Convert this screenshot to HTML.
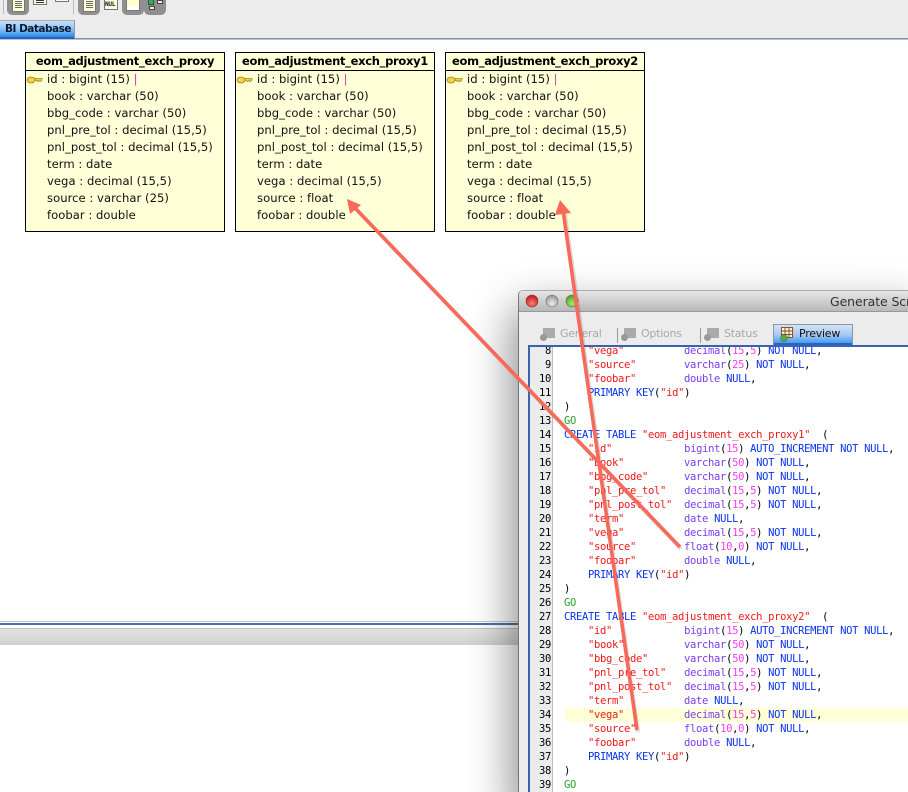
<!DOCTYPE html>
<html><head><meta charset="utf-8"><style>
html,body{margin:0;padding:0;background:#fff}
#p{position:relative;width:908px;height:792px;overflow:hidden;background:#fff;font-family:"DejaVu Sans","Liberation Sans",sans-serif}
#p div{position:absolute;box-sizing:border-box}
.t{top:52px;width:200px;height:180px;background:#ffffd8;border:1px solid #000}
.h{left:0;top:0;width:198px;height:18px;border-bottom:1px solid #000;font:bold 11.5px/17px "DejaVu Sans",sans-serif;text-align:center;letter-spacing:-.3px;color:#000;white-space:nowrap}
.r{left:21px;font-size:11.6px;line-height:17px;height:17px;color:#111;white-space:pre;letter-spacing:.03px}
.btn{top:-8px;background:#8f8f8f;border-radius:5px;height:23px}
.doc{background:#ffffd8;border:1px solid #777}
.code{left:564px;margin-top:1px;font:10.5px/14px "DejaVu Sans Mono","Liberation Mono",monospace;letter-spacing:-.32px;white-space:pre;color:#000;height:14px}
.n{left:529px;width:22px;margin-top:1px;text-align:right;font:10.5px/14px "DejaVu Sans Mono","Liberation Mono",monospace;letter-spacing:-.32px;color:#000;height:14px}
.code i{font-style:normal}
.s{color:#f01818}.y{color:#7b3df0}.k{color:#0a32f0}.m{color:#fb3cf0}.g{color:#2aa02a}
.tab{top:327px;font:11px/14px "DejaVu Sans",sans-serif;letter-spacing:-.25px;color:#a8a8a8;white-space:nowrap}
</style></head><body><div id="p">

<div style="left:0;top:0;width:908px;height:38px;background:#ececec"></div>
<div style="left:0;top:38px;width:908px;height:1px;background:#7f8fae"></div>
<div style="left:0;top:39px;width:908px;height:1px;background:#bcc2cc"></div>
<div style="left:3px;top:0;width:1px;height:14px;background:#bbb"></div>
<div style="left:73px;top:0;width:1px;height:14px;background:#bbb"></div>
<div class="btn" style="left:7px;width:22px"></div>
<div class="doc" style="left:12px;top:-4px;width:13px;height:16px;background:#ffffd0"></div>
<div style="left:15px;top:1px;width:7px;height:8px;background:repeating-linear-gradient(#667 0 1px,transparent 1px 2px)"></div>
<div class="doc" style="left:33px;top:-6px;width:14px;height:11px"></div>
<div style="left:36px;top:0;width:8px;height:3px;background:repeating-linear-gradient(#335 0 1px,transparent 1px 2px)"></div>
<div class="doc" style="left:55px;top:-6px;width:14px;height:8px"></div>
<div class="btn" style="left:78px;width:22px"></div>
<div class="doc" style="left:83px;top:-4px;width:13px;height:16px;background:#ffffd0"></div>
<div style="left:86px;top:1px;width:7px;height:8px;background:repeating-linear-gradient(#667 0 1px,transparent 1px 2px)"></div>
<div class="doc" style="left:104px;top:-4px;width:14px;height:14px"></div>
<div style="left:105px;top:1px;font:bold 6px/7px 'DejaVu Sans Mono',monospace;color:#113;letter-spacing:-.2px">NUL</div>
<div class="btn" style="left:122px;width:22px"></div>
<div class="doc" style="left:126px;top:-4px;width:14px;height:15px;background:linear-gradient(#ffffd0 0 9px,#fff 9px)"></div>
<div class="btn" style="left:144px;width:22px"></div>
<div style="left:148px;top:-1px;width:6px;height:6px;background:#3a6;border:1px solid #353"></div>
<div style="left:157px;top:0;width:6px;height:4px;background:#eee;border:1px solid #444"></div>
<div style="left:149px;top:6px;width:6px;height:4px;background:#eee;border:1px solid #444"></div>

<div style="left:0;top:20px;width:75px;height:18px;border-top:1px solid #aaa;border-right:1px solid #999;background:linear-gradient(#c4dcf8 0,#9cc8f6 40%,#4aa4f4 75%,#2a78e0 100%)"></div>
<div style="left:0;top:37px;width:74px;height:2px;background:#2a62c0"></div>
<div style="left:5px;top:22px;font:bold 10.5px/15px 'DejaVu Sans',sans-serif;color:#0a1a30;white-space:nowrap;letter-spacing:-.5px">BI Database</div>

<div class="t" style="left:25px"><div class="h">eom_adjustment_exch_proxy</div>
<div class="r" style="top:18px">id : bigint (15) <span style="color:#c040c0">|</span></div><div class="r" style="top:35px">book : varchar (50)</div><div class="r" style="top:52px">bbg_code : varchar (50)</div><div class="r" style="top:69px">pnl_pre_tol : decimal (15,5)</div><div class="r" style="top:86px">pnl_post_tol : decimal (15,5)</div><div class="r" style="top:103px">term : date</div><div class="r" style="top:120px">vega : decimal (15,5)</div><div class="r" style="top:137px">source : varchar (25)</div><div class="r" style="top:154px">foobar : double</div></div>
<div class="t" style="left:235px"><div class="h">eom_adjustment_exch_proxy1</div>
<div class="r" style="top:18px">id : bigint (15) <span style="color:#c040c0">|</span></div><div class="r" style="top:35px">book : varchar (50)</div><div class="r" style="top:52px">bbg_code : varchar (50)</div><div class="r" style="top:69px">pnl_pre_tol : decimal (15,5)</div><div class="r" style="top:86px">pnl_post_tol : decimal (15,5)</div><div class="r" style="top:103px">term : date</div><div class="r" style="top:120px">vega : decimal (15,5)</div><div class="r" style="top:137px">source : float</div><div class="r" style="top:154px">foobar : double</div></div>
<div class="t" style="left:445px"><div class="h">eom_adjustment_exch_proxy2</div>
<div class="r" style="top:18px">id : bigint (15) <span style="color:#c040c0">|</span></div><div class="r" style="top:35px">book : varchar (50)</div><div class="r" style="top:52px">bbg_code : varchar (50)</div><div class="r" style="top:69px">pnl_pre_tol : decimal (15,5)</div><div class="r" style="top:86px">pnl_post_tol : decimal (15,5)</div><div class="r" style="top:103px">term : date</div><div class="r" style="top:120px">vega : decimal (15,5)</div><div class="r" style="top:137px">source : float</div><div class="r" style="top:154px">foobar : double</div></div>

<svg style="position:absolute;left:0;top:0" width="660" height="100">
<g fill="#f0d23c" stroke="#a08a1c" stroke-width=".8"><ellipse cx="31" cy="80" rx="4" ry="3"/><path d="M35 78.500h7v1.500l-1.500 1.500h-1l-1-1-1 1-1-1h-1.500z"/></g>
<g fill="#f0d23c" stroke="#a08a1c" stroke-width=".8"><ellipse cx="241" cy="80" rx="4" ry="3"/><path d="M245 78.500h7v1.500l-1.500 1.500h-1l-1-1-1 1-1-1h-1.500z"/></g>
<g fill="#f0d23c" stroke="#a08a1c" stroke-width=".8"><ellipse cx="451" cy="80" rx="4" ry="3"/><path d="M455 78.500h7v1.500l-1.500 1.500h-1l-1-1-1 1-1-1h-1.500z"/></g>
</svg>

<div style="left:0;top:621px;width:520px;height:1px;background:#c8c8c8"></div>
<div style="left:0;top:623px;width:520px;height:2px;background:#4a6fb0"></div>
<div style="left:0;top:628px;width:520px;height:1px;background:#c4c4c4"></div>
<div style="left:0;top:629px;width:520px;height:16px;background:linear-gradient(#e4e4e4,#d0d0d0)"></div>

<div style="left:518px;top:290px;width:390px;height:502px;background:#ececec;border-left:1px solid #777;border-top:1px solid #aaa;border-top-left-radius:5px;box-shadow:0 24px 44px 6px rgba(0,0,0,.45)"></div>
<div style="left:519px;top:291px;width:389px;height:21px;background:linear-gradient(#e6e6e6,#b8b8b8);border-top-left-radius:4px;border-bottom:1px solid #999"></div>
<svg style="position:absolute;left:520px;top:292px" width="70" height="20">
<defs><radialGradient id="rd" cx=".5" cy=".7" r=".7"><stop offset="0" stop-color="#ff7c78"/><stop offset="1" stop-color="#b81818"/></radialGradient><radialGradient id="gy" cx=".5" cy=".7" r=".7"><stop offset="0" stop-color="#f0f0f0"/><stop offset="1" stop-color="#8e8e8e"/></radialGradient><radialGradient id="gr" cx=".5" cy=".7" r=".7"><stop offset="0" stop-color="#a8e878"/><stop offset="1" stop-color="#4a9a28"/></radialGradient></defs>
<circle cx="12" cy="9" r="6" fill="url(#rd)" stroke="#8a3030" stroke-width=".6"/><circle cx="32" cy="9" r="6" fill="url(#gy)" stroke="#777" stroke-width=".6"/><circle cx="52" cy="9" r="6" fill="url(#gr)" stroke="#4a7a30" stroke-width=".6"/>
</svg>
<div style="left:830px;top:294px;font:12.5px/15px 'DejaVu Sans',sans-serif;color:#333;white-space:nowrap;letter-spacing:-.1px">Generate Scr</div>

<svg style="position:absolute;left:540px;top:326px" width="320" height="20">
<g fill="#aaa"><rect x="3" y="2" width="12" height="10"/><circle cx="3.500" cy="11.500" r="3.500" fill="#999"/>
<rect x="84" y="2" width="12" height="10"/><circle cx="84.500" cy="11.500" r="3.500" fill="#999"/>
<rect x="167" y="2" width="12" height="10"/><circle cx="167.500" cy="11.500" r="3.500" fill="#999"/></g>
</svg>
<div class="tab" style="left:560px">General</div>
<div class="tab" style="left:641px">Options</div>
<div class="tab" style="left:724px">Status</div>
<div style="left:617px;top:328px;width:1px;height:15px;background:#999"></div>
<div style="left:700px;top:328px;width:1px;height:15px;background:#999"></div>
<div style="left:773px;top:324px;width:80px;height:21px;border:1px solid #8a97a8;border-bottom:0;background:linear-gradient(#d4e2f6 0,#a8c8f2 50%,#5aa8f4 80%,#3a8cf0 100%)"></div>
<div style="left:774px;top:343px;width:78px;height:2px;background:#2a62c0"></div>
<svg style="position:absolute;left:780px;top:326px" width="20" height="18"><rect x="1.500" y="1.500" width="11" height="10" fill="#fff6d8" stroke="#8a5030"/><path d="M1 5h12M1 8.500h12M5 1v11M9 1v11" stroke="#8a5030"/><circle cx="4" cy="12" r="3.400" fill="#5aa848" stroke="#3a7a30" stroke-width=".6"/></svg>
<div style="left:799px;top:327px;font:11px/14px 'DejaVu Sans',sans-serif;letter-spacing:-.25px;color:#111;white-space:nowrap">Preview</div>

<div style="left:528px;top:345px;width:380px;height:447px;background:#fff;border-left:2px solid #3a62b0;border-top:2px solid #3a62b0"></div>
<div style="left:530px;top:347px;width:23px;height:445px;background:#ececec;border-right:1px solid #bbb"></div>
<div style="left:565px;top:708px;width:343px;height:14px;background:#ffffd8"></div>

<div style="left:530px;top:347px;width:378px;height:445px;overflow:hidden">
<div class="n" style="left:-1px;top:-4px">8</div><div class="code" style="left:34px;top:-4px">    <i class="s">"vega"</i>          <i class="y">decimal</i>(<i class="m">15</i>,<i class="m">5</i>) <i class="k">NOT NULL</i>,</div>
<div class="n" style="left:-1px;top:10px">9</div><div class="code" style="left:34px;top:10px">    <i class="s">"source"</i>        <i class="y">varchar</i>(<i class="m">25</i>) <i class="k">NOT NULL</i>,</div>
<div class="n" style="left:-1px;top:24px">10</div><div class="code" style="left:34px;top:24px">    <i class="s">"foobar"</i>        <i class="y">double</i> <i class="k">NULL</i>,</div>
<div class="n" style="left:-1px;top:38px">11</div><div class="code" style="left:34px;top:38px">    <i class="k">PRIMARY KEY</i>(<i class="s">"id"</i>)</div>
<div class="n" style="left:-1px;top:52px">12</div><div class="code" style="left:34px;top:52px">)</div>
<div class="n" style="left:-1px;top:66px">13</div><div class="code" style="left:34px;top:66px"><i class="g">GO</i></div>
<div class="n" style="left:-1px;top:80px">14</div><div class="code" style="left:34px;top:80px"><i class="k">CREATE TABLE</i> <i class="s">"eom_adjustment_exch_proxy1"</i>  (</div>
<div class="n" style="left:-1px;top:94px">15</div><div class="code" style="left:34px;top:94px">    <i class="s">"id"</i>            <i class="y">bigint</i>(<i class="m">15</i>) <i class="k">AUTO_INCREMENT NOT NULL</i>,</div>
<div class="n" style="left:-1px;top:108px">16</div><div class="code" style="left:34px;top:108px">    <i class="s">"book"</i>          <i class="y">varchar</i>(<i class="m">50</i>) <i class="k">NOT NULL</i>,</div>
<div class="n" style="left:-1px;top:122px">17</div><div class="code" style="left:34px;top:122px">    <i class="s">"bbg_code"</i>      <i class="y">varchar</i>(<i class="m">50</i>) <i class="k">NOT NULL</i>,</div>
<div class="n" style="left:-1px;top:136px">18</div><div class="code" style="left:34px;top:136px">    <i class="s">"pnl_pre_tol"</i>   <i class="y">decimal</i>(<i class="m">15</i>,<i class="m">5</i>) <i class="k">NOT NULL</i>,</div>
<div class="n" style="left:-1px;top:150px">19</div><div class="code" style="left:34px;top:150px">    <i class="s">"pnl_post_tol"</i>  <i class="y">decimal</i>(<i class="m">15</i>,<i class="m">5</i>) <i class="k">NOT NULL</i>,</div>
<div class="n" style="left:-1px;top:164px">20</div><div class="code" style="left:34px;top:164px">    <i class="s">"term"</i>          <i class="y">date</i> <i class="k">NULL</i>,</div>
<div class="n" style="left:-1px;top:178px">21</div><div class="code" style="left:34px;top:178px">    <i class="s">"vega"</i>          <i class="y">decimal</i>(<i class="m">15</i>,<i class="m">5</i>) <i class="k">NOT NULL</i>,</div>
<div class="n" style="left:-1px;top:192px">22</div><div class="code" style="left:34px;top:192px">    <i class="s">"source"</i>        <i class="y">float</i>(<i class="m">10</i>,<i class="m">0</i>) <i class="k">NOT NULL</i>,</div>
<div class="n" style="left:-1px;top:206px">23</div><div class="code" style="left:34px;top:206px">    <i class="s">"foobar"</i>        <i class="y">double</i> <i class="k">NULL</i>,</div>
<div class="n" style="left:-1px;top:220px">24</div><div class="code" style="left:34px;top:220px">    <i class="k">PRIMARY KEY</i>(<i class="s">"id"</i>)</div>
<div class="n" style="left:-1px;top:234px">25</div><div class="code" style="left:34px;top:234px">)</div>
<div class="n" style="left:-1px;top:248px">26</div><div class="code" style="left:34px;top:248px"><i class="g">GO</i></div>
<div class="n" style="left:-1px;top:262px">27</div><div class="code" style="left:34px;top:262px"><i class="k">CREATE TABLE</i> <i class="s">"eom_adjustment_exch_proxy2"</i>  (</div>
<div class="n" style="left:-1px;top:276px">28</div><div class="code" style="left:34px;top:276px">    <i class="s">"id"</i>            <i class="y">bigint</i>(<i class="m">15</i>) <i class="k">AUTO_INCREMENT NOT NULL</i>,</div>
<div class="n" style="left:-1px;top:290px">29</div><div class="code" style="left:34px;top:290px">    <i class="s">"book"</i>          <i class="y">varchar</i>(<i class="m">50</i>) <i class="k">NOT NULL</i>,</div>
<div class="n" style="left:-1px;top:304px">30</div><div class="code" style="left:34px;top:304px">    <i class="s">"bbg_code"</i>      <i class="y">varchar</i>(<i class="m">50</i>) <i class="k">NOT NULL</i>,</div>
<div class="n" style="left:-1px;top:318px">31</div><div class="code" style="left:34px;top:318px">    <i class="s">"pnl_pre_tol"</i>   <i class="y">decimal</i>(<i class="m">15</i>,<i class="m">5</i>) <i class="k">NOT NULL</i>,</div>
<div class="n" style="left:-1px;top:332px">32</div><div class="code" style="left:34px;top:332px">    <i class="s">"pnl_post_tol"</i>  <i class="y">decimal</i>(<i class="m">15</i>,<i class="m">5</i>) <i class="k">NOT NULL</i>,</div>
<div class="n" style="left:-1px;top:346px">33</div><div class="code" style="left:34px;top:346px">    <i class="s">"term"</i>          <i class="y">date</i> <i class="k">NULL</i>,</div>
<div class="n" style="left:-1px;top:360px">34</div><div class="code" style="left:34px;top:360px">    <i class="s">"vega"</i>          <i class="y">decimal</i>(<i class="m">15</i>,<i class="m">5</i>) <i class="k">NOT NULL</i>,</div>
<div class="n" style="left:-1px;top:374px">35</div><div class="code" style="left:34px;top:374px">    <i class="s">"source"</i>        <i class="y">float</i>(<i class="m">10</i>,<i class="m">0</i>) <i class="k">NOT NULL</i>,</div>
<div class="n" style="left:-1px;top:388px">36</div><div class="code" style="left:34px;top:388px">    <i class="s">"foobar"</i>        <i class="y">double</i> <i class="k">NULL</i>,</div>
<div class="n" style="left:-1px;top:402px">37</div><div class="code" style="left:34px;top:402px">    <i class="k">PRIMARY KEY</i>(<i class="s">"id"</i>)</div>
<div class="n" style="left:-1px;top:416px">38</div><div class="code" style="left:34px;top:416px">)</div>
<div class="n" style="left:-1px;top:430px">39</div><div class="code" style="left:34px;top:430px"><i class="g">GO</i></div>
</div>

<svg style="position:absolute;left:0;top:0" width="908" height="792">
<g fill="none" stroke="#000" stroke-opacity=".13" stroke-width="4"><path d="M681 549L358 211"/><path d="M638 732L565 214"/></g>
<path d="M680 547L354 207" stroke="#f8695a" stroke-width="3.600" fill="none"/>
<path d="M637 730L563 210" stroke="#f8695a" stroke-width="3.600" fill="none"/>
<path d="M347 199L361 205L350 214Z" fill="#f8695a"/>
<path d="M560 200L571 213L555 215Z" fill="#f8695a"/>
</svg>
</div></body></html>
